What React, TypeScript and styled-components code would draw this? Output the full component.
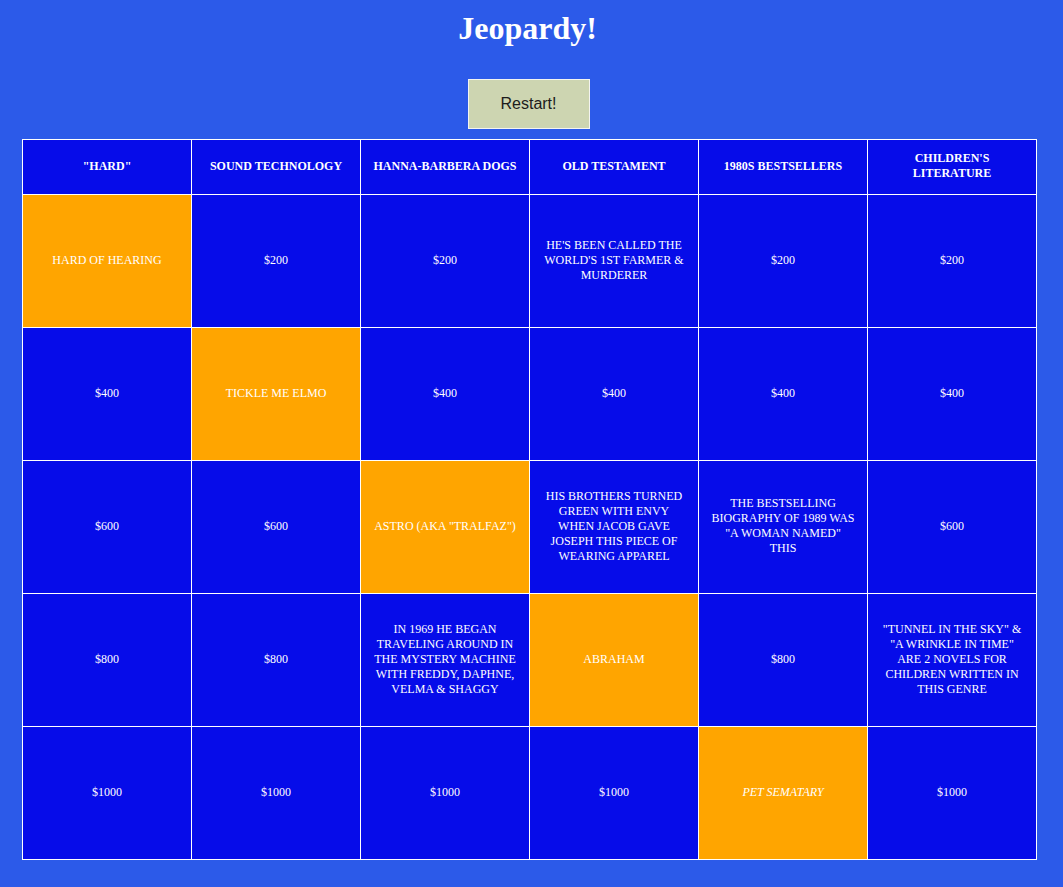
import React from "react";
import styled, { createGlobalStyle } from "styled-components";

const GlobalStyle = createGlobalStyle`
  html, body {
    margin: 0;
    padding: 0;
    background: #2c5ae9;
  }
  body {
    font-family: "Liberation Serif", "Times New Roman", serif;
  }
`;

const Page = styled.div`
  display: flex;
  flex-direction: column;
  align-items: center;
  padding: 10px 26px 0 22px;
  min-height: 877px;
`;

const Title = styled.h1`
  margin: 0 4px 0 0;
  font-family: "Liberation Serif", "Times New Roman", serif;
  font-size: 32px;
  font-weight: bold;
  color: #ffffff;
  line-height: 37px;
`;

const RestartButton = styled.button`
  margin: 32px 2px 0 0;
  width: 122px;
  height: 50px;
  background: #cdd5b1;
  border: 1px solid #f4f4f0;
  font-family: "Liberation Sans", Arial, sans-serif;
  font-size: 16px;
  color: #1c1c1c;
  cursor: pointer;
`;

const Board = styled.div`
  margin-top: 10px;
  display: grid;
  grid-template-columns: repeat(6, 168px);
  grid-template-rows: 54px repeat(5, 132px);
  gap: 1px;
  padding: 1px;
  background: #ffffff;
`;

const Cell = styled.div<{ $revealed?: boolean; $header?: boolean; $italic?: boolean }>`
  display: flex;
  align-items: center;
  justify-content: center;
  text-align: center;
  padding: 0 12px 2px;
  background: ${(p) => (p.$revealed ? "#ffa500" : "#060ce9")};
  color: #ffffff;
  font-family: "Liberation Serif", "Times New Roman", serif;
  font-size: 12px;
  line-height: 15px;
  font-weight: ${(p) => (p.$header ? "bold" : "normal")};
  font-style: ${(p) => (p.$italic ? "italic" : "normal")};
  text-transform: uppercase;
`;

const categories = [
  '"HARD"',
  "SOUND TECHNOLOGY",
  "HANNA-BARBERA DOGS",
  "OLD TESTAMENT",
  "1980S BESTSELLERS",
  "CHILDREN'S LITERATURE",
];

type C = { text: string; revealed?: boolean; italic?: boolean };

const rows: C[][] = [
  [
    { text: "HARD OF HEARING", revealed: true },
    { text: "$200" },
    { text: "$200" },
    { text: "HE'S BEEN CALLED THE WORLD'S 1ST FARMER & MURDERER" },
    { text: "$200" },
    { text: "$200" },
  ],
  [
    { text: "$400" },
    { text: "TICKLE ME ELMO", revealed: true },
    { text: "$400" },
    { text: "$400" },
    { text: "$400" },
    { text: "$400" },
  ],
  [
    { text: "$600" },
    { text: "$600" },
    { text: 'ASTRO (AKA "TRALFAZ")', revealed: true },
    { text: "HIS BROTHERS TURNED GREEN WITH ENVY WHEN JACOB GAVE JOSEPH THIS PIECE OF WEARING APPAREL" },
    { text: 'THE BESTSELLING BIOGRAPHY OF 1989 WAS "A WOMAN NAMED" THIS' },
    { text: "$600" },
  ],
  [
    { text: "$800" },
    { text: "$800" },
    { text: "IN 1969 HE BEGAN TRAVELING AROUND IN THE MYSTERY MACHINE WITH FREDDY, DAPHNE, VELMA & SHAGGY" },
    { text: "ABRAHAM", revealed: true },
    { text: "$800" },
    { text: '"TUNNEL IN THE SKY" & "A WRINKLE IN TIME" ARE 2 NOVELS FOR CHILDREN WRITTEN IN THIS GENRE' },
  ],
  [
    { text: "$1000" },
    { text: "$1000" },
    { text: "$1000" },
    { text: "$1000" },
    { text: "PET SEMATARY", revealed: true, italic: true },
    { text: "$1000" },
  ],
];

export default function App() {
  return (
    <>
      <GlobalStyle />
      <Page>
        <Title>Jeopardy!</Title>
        <RestartButton>Restart!</RestartButton>
        <Board>
          {categories.map((c) => (
            <Cell key={c} $header>
              {c}
            </Cell>
          ))}
          {rows.map((r, i) =>
            r.map((c, j) => (
              <Cell key={`${i}-${j}`} $revealed={c.revealed} $italic={c.italic}>
                {c.text}
              </Cell>
            ))
          )}
        </Board>
      </Page>
    </>
  );
}
